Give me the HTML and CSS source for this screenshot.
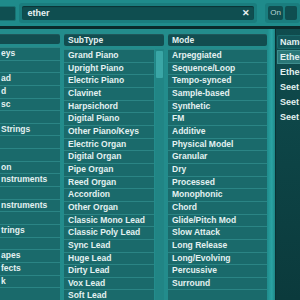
FILE: index.html
```html
<!DOCTYPE html>
<html lang="en">
<head>
  <meta charset="UTF-8">
  <title>Preset Browser</title>
  <link rel="stylesheet" href="styles.css">
</head>
<body>
  <div class="topbar">
    <div class="field-left"></div>
    <div class="search-frame">
      <div class="search">
        <span class="search-text">ether</span>
        <span class="clear">&#x2715;</span>
      </div>
    </div>
    <div class="on-frame">
      <span class="on-btn">On</span>
      <span class="on-box"></span>
    </div>
  </div>
  <div class="rule"></div>

  <div class="browser">
    <div class="col col-type">
      <div class="col-head"></div>
      <div class="list">
        <div class="row">eys</div>
        <div class="row"></div>
        <div class="row">ad</div>
        <div class="row">d</div>
        <div class="row">sc</div>
        <div class="row"></div>
        <div class="row">Strings</div>
        <div class="row"></div>
        <div class="row"></div>
        <div class="row">on</div>
        <div class="row">nstruments</div>
        <div class="row"></div>
        <div class="row">nstruments</div>
        <div class="row"></div>
        <div class="row">trings</div>
        <div class="row"></div>
        <div class="row">apes</div>
        <div class="row">fects</div>
        <div class="row">k</div>
        <div class="row"></div>
      </div>
    </div>

    <div class="col col-sub">
      <div class="col-head">SubType</div>
      <div class="list-wrap">
        <div class="list">
          <div class="row">Grand Piano</div>
          <div class="row">Upright Piano</div>
          <div class="row">Electric Piano</div>
          <div class="row">Clavinet</div>
          <div class="row">Harpsichord</div>
          <div class="row">Digital Piano</div>
          <div class="row">Other Piano/Keys</div>
          <div class="row">Electric Organ</div>
          <div class="row">Digital Organ</div>
          <div class="row">Pipe Organ</div>
          <div class="row">Reed Organ</div>
          <div class="row">Accordion</div>
          <div class="row">Other Organ</div>
          <div class="row">Classic Mono Lead</div>
          <div class="row">Classic Poly Lead</div>
          <div class="row">Sync Lead</div>
          <div class="row">Huge Lead</div>
          <div class="row">Dirty Lead</div>
          <div class="row">Vox Lead</div>
          <div class="row">Soft Lead</div>
        </div>
        <div class="scrollbar"><div class="thumb"></div></div>
      </div>
    </div>

    <div class="col col-mode">
      <div class="col-head">Mode</div>
      <div class="list">
        <div class="row">Arpeggiated</div>
        <div class="row">Sequence/Loop</div>
        <div class="row">Tempo-synced</div>
        <div class="row">Sample-based</div>
        <div class="row">Synthetic</div>
        <div class="row">FM</div>
        <div class="row">Additive</div>
        <div class="row">Physical Model</div>
        <div class="row">Granular</div>
        <div class="row">Dry</div>
        <div class="row">Processed</div>
        <div class="row">Monophonic</div>
        <div class="row">Chord</div>
        <div class="row">Glide/Pitch Mod</div>
        <div class="row">Slow Attack</div>
        <div class="row">Long Release</div>
        <div class="row">Long/Evolving</div>
        <div class="row">Percussive</div>
        <div class="row">Surround</div>
        <div class="row"></div>
      </div>
    </div>

    <div class="splitter"></div>

    <div class="names">
      <div class="names-head">Name</div>
      <div class="name-row selected">Ether</div>
      <div class="name-row">Ether</div>
      <div class="name-row">Seet</div>
      <div class="name-row">Seet</div>
      <div class="name-row">Seet</div>
    </div>
  </div>
</body>
</html>
```

FILE: styles.css
```css
body {
  margin: 0;
  padding: 0;
  width: 300px;
  height: 300px;
  overflow: hidden;
  font-family: "Liberation Sans", Arial, sans-serif;
  font-weight: bold;
  font-size: 8.5px;
  color: #e4f1f1;
  background-color: #1e8282;
}
.topbar {
  display: flex;
  align-items: center;
  height: 26px;
  background-color: #1f8b8b;
  gap: 3px;
}
.field-left {
  width: 17px;
  height: 13px;
  margin-left: -2px;
  background-color: #0f4f51;
  border-radius: 0 2px 2px 0;
  border: 1px solid #187373;
}
.search-frame {
  box-sizing: border-box;
  width: 246px;
  padding: 3px;
  background-color: #1a7d7e;
  border-radius: 3px;
}
.search {
  display: flex;
  justify-content: space-between;
  align-items: center;
  height: 14px;
  padding: 0 4px 0 5px;
  background-color: #0f4e50;
  border-radius: 2px;
  box-shadow: inset 0 1px 1px rgba(0, 0, 0, 0.35);
}
.search-text {
  font-size: 9px;
  color: #e8f2f2;
}
.clear {
  font-size: 9px;
  color: #e8f2f2;
}
.on-frame {
  display: flex;
  gap: 2px;
  padding: 3px;
  margin-left: 5px;
  background-color: #1a7d7e;
  border-radius: 3px;
}
.on-btn {
  width: 15px;
  height: 14px;
  line-height: 14px;
  text-align: center;
  font-weight: normal;
  font-size: 8px;
  color: #b9d6d6;
  background-color: #0f4e50;
  border-radius: 2px;
}
.on-box {
  width: 12px;
  height: 14px;
  background-color: #0f4e50;
  border-radius: 2px;
}
.rule {
  height: 3px;
  background-color: #0a2a2b;
  box-shadow: 0 1px 0 #167070;
}
.browser {
  display: flex;
  height: 271px;
  background-color: #238c8c;
}
.col {
  display: flex;
  flex-direction: column;
  gap: 3px;
  flex-shrink: 0;
  padding-top: 5px;
}
.col-type {
  width: 60px;
  margin-right: 4px;
}
.col-sub {
  width: 100px;
  margin-right: 4px;
}
.col-mode {
  width: 99px;
}
.col-head {
  height: 12px;
  line-height: 12px;
  padding: 0 4px;
  background-color: #124d50;
  border-radius: 2px;
  box-shadow: inset 0 1px 0 rgba(255, 255, 255, 0.06);
}
.col-type .col-head {
  border-radius: 0 2px 2px 0;
}
.list {
  display: grid;
  grid-auto-rows: 11.67px;
  gap: 1px;
  padding-top: 1px;
  background-color: #2b8585;
  flex: 1;
}
.row {
  line-height: 11.67px;
  padding: 0 4px;
  white-space: nowrap;
  overflow: hidden;
  background-color: #1a6a6b;
}
.col-type .row {
  padding: 0 1px;
}
.list-wrap {
  display: flex;
  flex: 1;
}
.list-wrap .list {
  flex: 1;
}
.scrollbar {
  width: 9px;
  margin-left: 1px;
  background-color: #218585;
}
.thumb {
  height: 27px;
  margin: 2px 1px 0;
  background-color: #3aa6a6;
  border-radius: 1px;
}
.splitter {
  width: 8px;
  flex-shrink: 0;
  background: linear-gradient(to right, #1f8c8c, #2aa3a3 60%, #1d8686);
}
.names {
  flex: 1;
  min-width: 0;
  padding: 6px 0 0 1px;
  white-space: nowrap;
  background: linear-gradient(to bottom, #0f4c4e, #0b3a3c);
  border-left: 1px solid #0a3234;
}
.names-head {
  height: 12px;
  line-height: 12px;
  margin: 0 0 1px 0;
  padding: 0 2px;
  font-size: 9px;
  background-color: #14575a;
  border: 1px solid #1b6a6c;
  border-right: none;
  border-radius: 2px 0 0 2px;
}
.name-row {
  height: 15px;
  line-height: 15px;
  padding: 0 3px;
  font-size: 9px;
}
.name-row.selected {
  line-height: 12px;
  height: 12px;
  padding: 0 2px;
  margin-bottom: 0.5px;
  background-color: #2a7777;
  border: 1px solid #3f8e8e;
  border-right: none;
}
```
